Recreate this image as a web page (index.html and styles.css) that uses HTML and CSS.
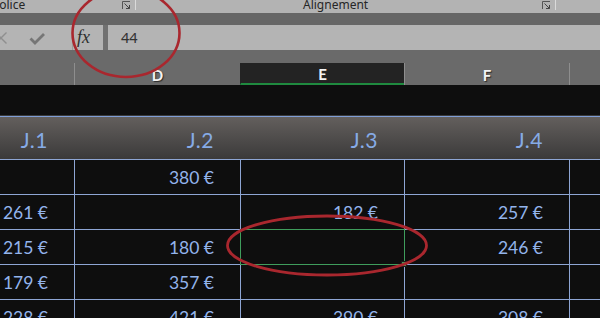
FILE: index.html
```html
<!DOCTYPE html>
<html lang="fr">
<head>
<meta charset="utf-8">
<title>Excel</title>
<link rel="stylesheet" href="styles.css">
</head>
<body>
<div class="app">
  <div class="ribbon">
    <div class="group g1">
      <span class="glabel police">Police</span>
      <svg class="launcher" width="9" height="9" viewBox="0 0 9 9"><path d="M0.5 8V0.5H8" fill="none" stroke="#555" stroke-width="1"/><path d="M2.5 2.5L7.5 7.5M4 7.5H7.5V4" fill="none" stroke="#444" stroke-width="1"/></svg>
    </div>
    <div class="group g2">
      <span class="glabel align">Alignement</span>
      <svg class="launcher" width="9" height="9" viewBox="0 0 9 9"><path d="M0.5 8V0.5H8" fill="none" stroke="#555" stroke-width="1"/><path d="M2.5 2.5L7.5 7.5M4 7.5H7.5V4" fill="none" stroke="#444" stroke-width="1"/></svg>
    </div>
  </div>
  <div class="band"></div>
  <div class="fbar">
    <div class="fbtns">
      <svg class="xicon" width="14" height="14" viewBox="0 0 14 14"><path d="M1.5 1.5L12.5 12.5M12.5 1.5L1.5 12.5" stroke="#8f8f8f" stroke-width="1.4" fill="none"/></svg>
      <svg class="check" width="16" height="13" viewBox="0 0 16 13"><path d="M1.5 6.5L6 11L15 2" stroke="#767676" stroke-width="2.8" fill="none"/></svg>
    </div>
    <div class="fx">fx</div>
    <div class="fgap"></div>
    <div class="finput">44</div>
  </div>
  <div class="colhead">
    <div class="ch c"></div>
    <div class="ch">D</div>
    <div class="ch sel">E</div>
    <div class="ch">F</div>
    <div class="ch"></div>
  </div>
  <div class="blackrow"></div>
  <div class="sheet">
    <div class="hrow">
      <div class="hc">J.1</div>
      <div class="hc">J.2</div>
      <div class="hc">J.3</div>
      <div class="hc">J.4</div>
      <div class="hc"></div>
    </div>
    <div class="row">
      <div class="cell first"></div>
      <div class="cell">380 €</div>
      <div class="cell"></div>
      <div class="cell"></div>
      <div class="cell"></div>
    </div>
    <div class="row">
      <div class="cell first">261 €</div>
      <div class="cell"></div>
      <div class="cell">182 €</div>
      <div class="cell">257 €</div>
      <div class="cell"></div>
    </div>
    <div class="row">
      <div class="cell first">215 €</div>
      <div class="cell">180 €</div>
      <div class="cell active"></div>
      <div class="cell">246 €</div>
      <div class="cell"></div>
    </div>
    <div class="row">
      <div class="cell first">179 €</div>
      <div class="cell">357 €</div>
      <div class="cell"></div>
      <div class="cell"></div>
      <div class="cell"></div>
    </div>
    <div class="row">
      <div class="cell first">228 €</div>
      <div class="cell">421 €</div>
      <div class="cell">390 €</div>
      <div class="cell">308 €</div>
      <div class="cell"></div>
    </div>
  </div>
  <svg class="marks" width="600" height="318" viewBox="0 0 600 318">
    <ellipse cx="126" cy="33" rx="53.5" ry="44" fill="none" stroke="#a9272e" stroke-width="2.6"/>
    <ellipse cx="327" cy="245.5" rx="99.5" ry="29.5" fill="none" stroke="#a9272e" stroke-width="2.8"/>
  </svg>
</div>
</body>
</html>
```
FILE: styles.css
```css
html, body {
  margin: 0;
  padding: 0;
  background: #0e0e0e;
  overflow: hidden;
}
.app {
  position: relative;
  width: 600px;
  height: 318px;
  overflow: hidden;
  font-family: "Lato", "Noto Sans", sans-serif;
}
.ribbon {
  display: flex;
  height: 13px;
  background: #b3b3b3;
  overflow: hidden;
  font-family: "Noto Sans", "Open Sans", sans-serif;
  font-size: 12px;
  color: #262626;
}
.group {
  display: flex;
  align-items: flex-start;
  height: 13px;
  position: relative;
}
.group::after {
  content: "";
  position: absolute;
  right: 0;
  top: 0;
  height: 10px;
  width: 1px;
  background: #dadada;
}
.g1 { width: 136px; }
.g2 { width: 420px; }
.glabel {
  line-height: 13px;
  margin-top: -2px;
  white-space: nowrap;
}
.police { margin-left: -8px; }
.align { margin-left: 167px; }
.launcher {
  margin-left: auto;
  margin-right: 5px;
  margin-top: 1px;
}
.band {
  height: 12px;
  background: #666666;
}
.fbar {
  display: flex;
  height: 25px;
  background: #b4b4b4;
}
.fbtns {
  width: 72px;
  border-right: 1px solid #9c9c9c;
  display: flex;
  align-items: center;
  position: relative;
}
.xicon {
  margin-left: -6px;
  margin-top: 1px;
}
.check {
  margin-left: 21px;
  margin-top: 1px;
}
.fx {
  width: 30px;
  font-family: "Liberation Serif", serif;
  font-style: italic;
  font-size: 18px;
  color: #2e2e2e;
  line-height: 25px;
  padding-left: 4px;
  box-sizing: border-box;
}
.fgap {
  width: 5px;
  background: #717171;
}
.finput {
  flex: 1;
  font-family: "Noto Sans", "Open Sans", sans-serif;
  font-size: 14.5px;
  color: #333;
  line-height: 25px;
  padding-left: 13px;
}
.colhead {
  display: grid;
  grid-template-columns: 74px 166px 164px 165px 1fr;
  height: 22px;
  padding-top: 13px;
  background: #6a6a6a;
}
.ch {
  height: 22px;
  box-sizing: border-box;
  border-left: 1px solid #8e8e8e;
  display: flex;
  align-items: center;
  justify-content: center;
  padding-top: 1px;
  color: #f4f4f4;
  font-size: 15px;
  font-weight: 700;
  text-shadow: 1px 1px 1px #2a2a2a;
}
.ch.c { border-left: none; }
.ch.sel {
  background: #232323;
  border-left-color: #232323;
  border-bottom: 2px solid #1f8a3f;
}
.blackrow {
  height: 30px;
  background: #0e0e0e;
  border-bottom: 1px solid #3a3a3a;
}
.sheet {
  display: flex;
  flex-direction: column;
}
.hrow, .row {
  display: grid;
  grid-template-columns: 74px 166px 164px 165px 1fr;
}
.hrow {
  height: 42px;
  border-top: 1px solid #7f9ed6;
  background: linear-gradient(#635f5d, #3b3a3a);
}
.hc {
  display: flex;
  align-items: center;
  justify-content: flex-end;
  padding: 3px 26px 0 0;
  font-size: 21px;
  letter-spacing: 0.5px;
  color: #86abe6;
}
.row {
  height: 35px;
}
.cell {
  position: relative;
  box-sizing: border-box;
  border-top: 1px solid #8ea6d4;
  border-left: 1px solid #8ea6d4;
  background: #0e0e0e;
  display: flex;
  align-items: center;
  justify-content: flex-end;
  padding: 1px 26px 0 0;
  font-size: 17.5px;
  color: #93b4ec;
  white-space: nowrap;
}
.cell.first { border-left: none; }
.cell.active { z-index: 3; }
.cell.active::after {
  content: "";
  position: absolute;
  top: -1px;
  left: -1px;
  right: -1px;
  bottom: -1px;
  border: 1px solid #3f9d5c;
}
.cell.active::before {
  content: "";
  position: absolute;
  right: -3px;
  bottom: -3px;
  width: 4px;
  height: 4px;
  background: #3f9d5c;
  border: 1px solid #1a1a1a;
  z-index: 2;
}
.marks {
  position: absolute;
  left: 0;
  top: 0;
  pointer-events: none;
  z-index: 5;
}
```
